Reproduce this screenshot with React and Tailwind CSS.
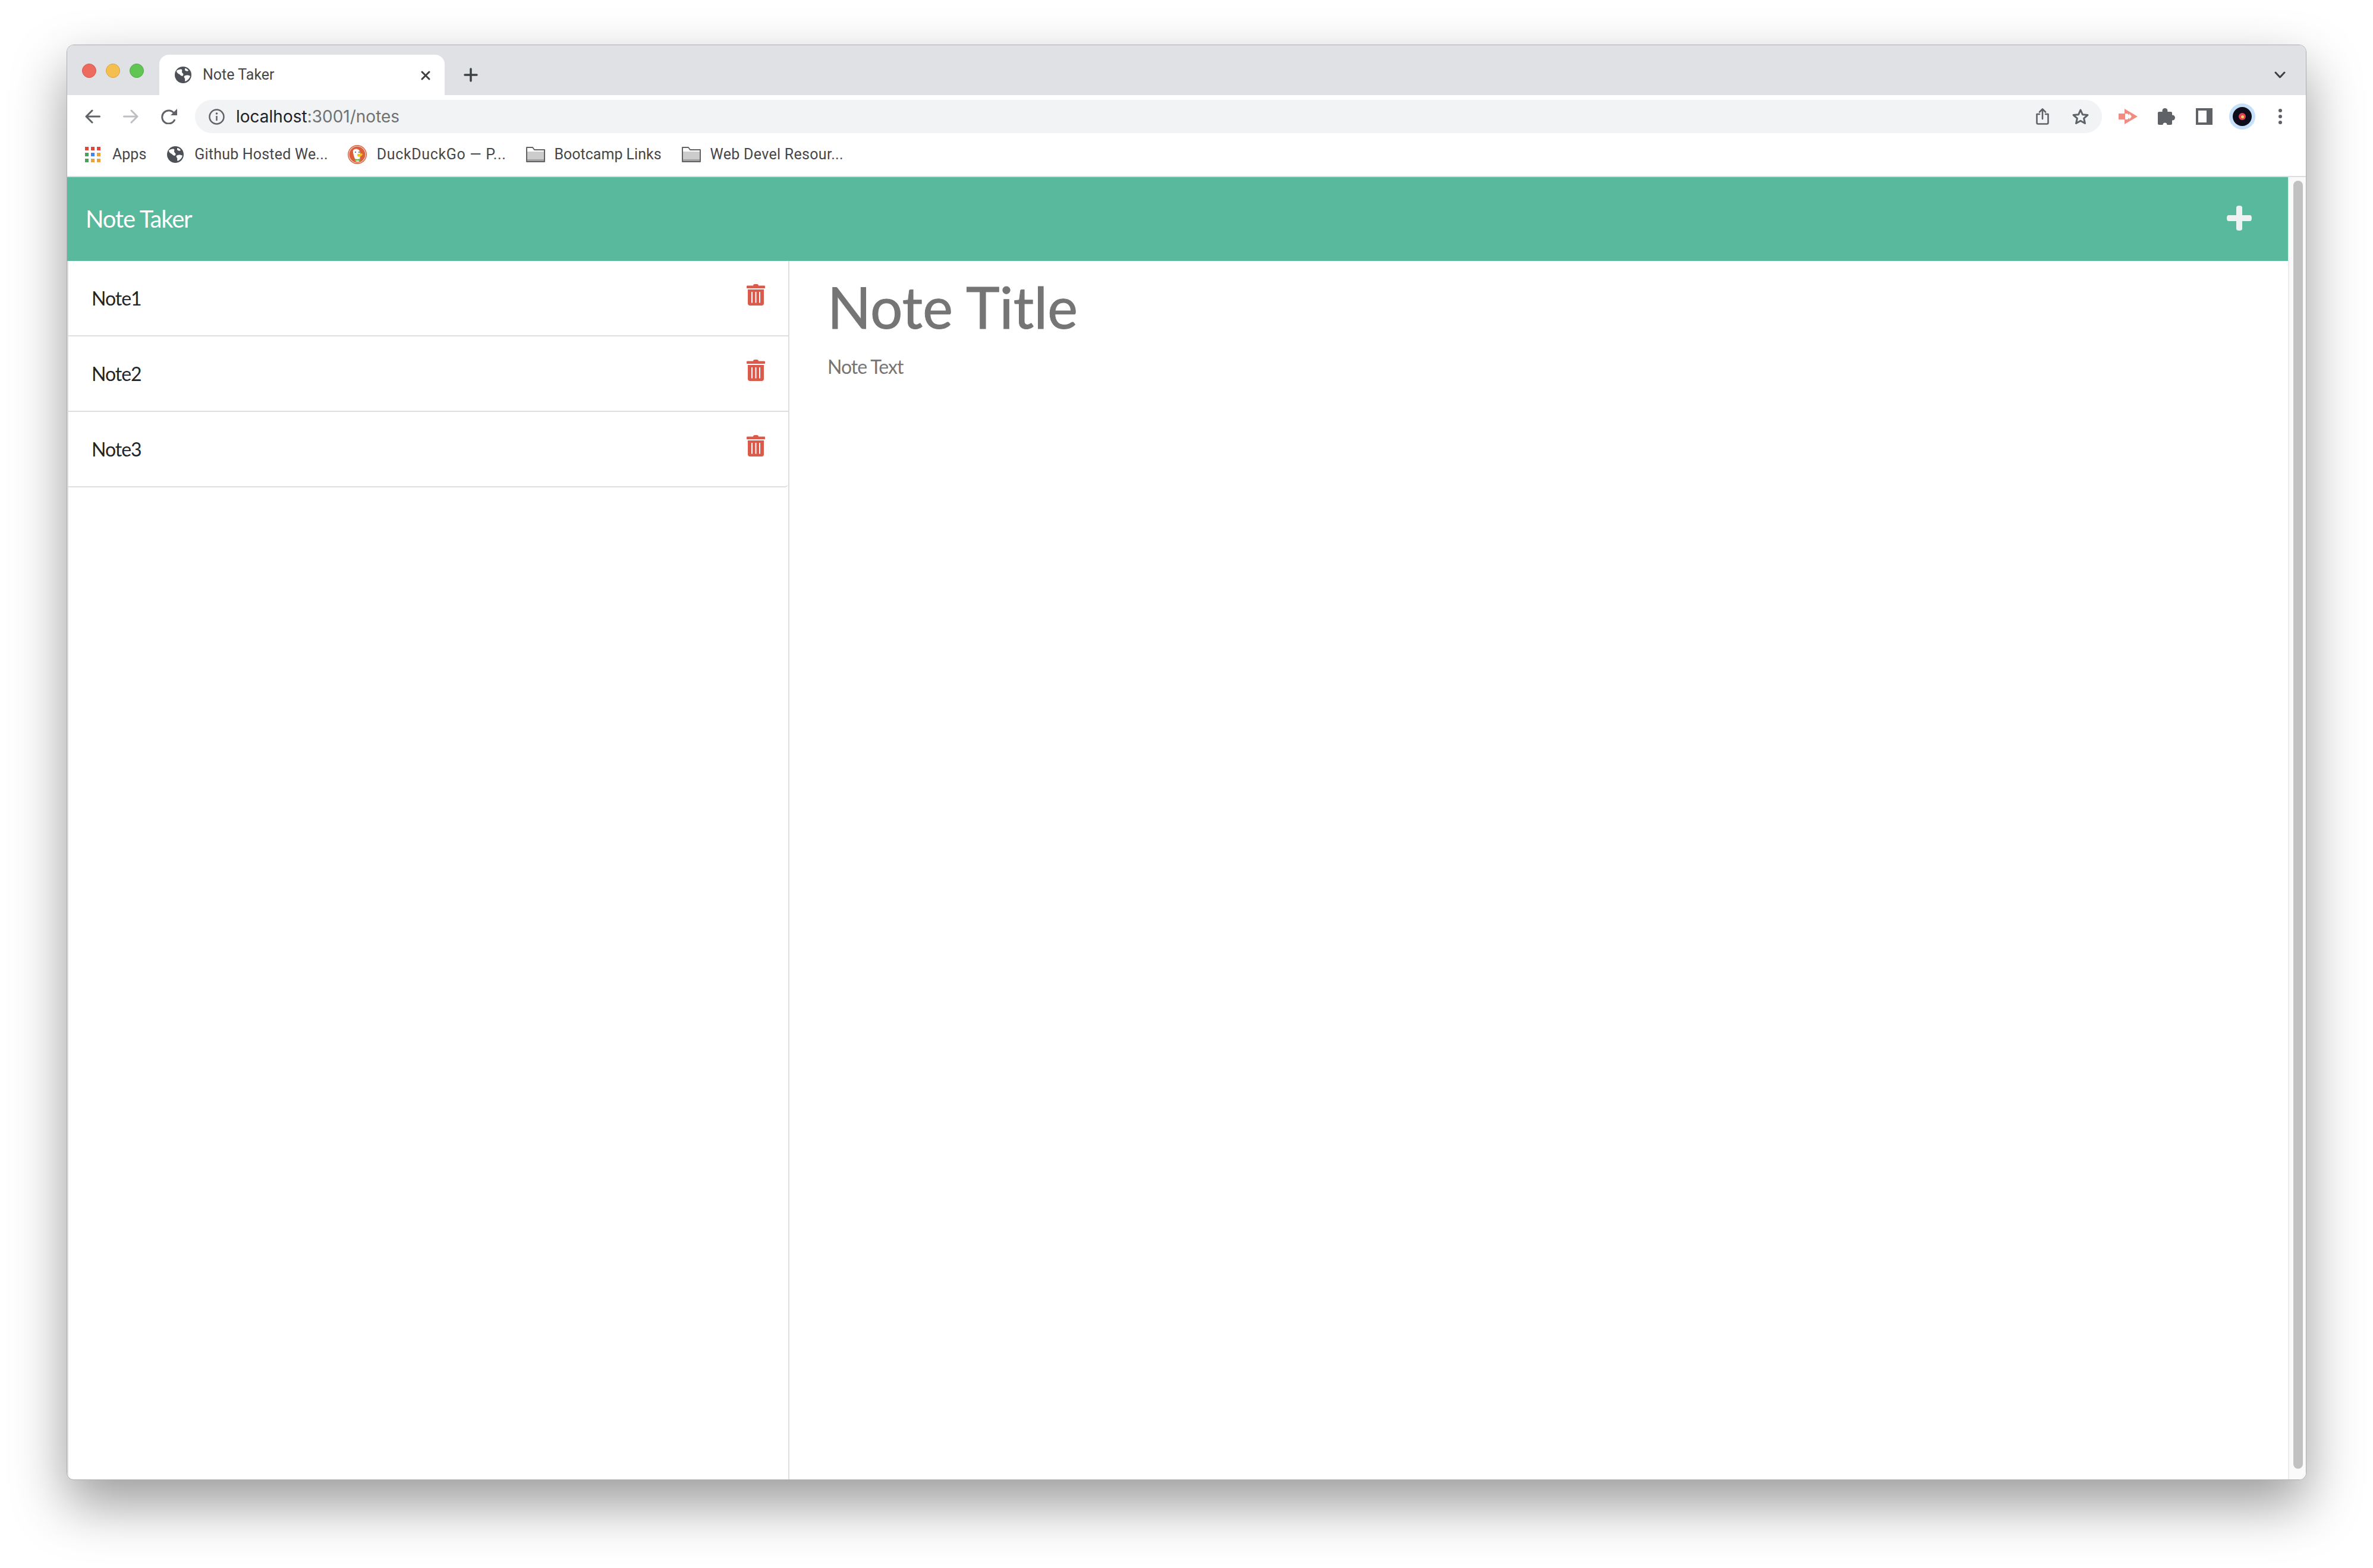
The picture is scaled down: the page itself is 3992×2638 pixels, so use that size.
const NOTES = ['Note1', 'Note2', 'Note3'];

function Globe({ className }) {
  return (
    <svg className={className} viewBox="0 0 28 28">
      <circle cx="14" cy="14" r="14" fill="#4d5157" />
      <path d="M3 7c3-2 6-3 9-2 1 2-1 4 1 6 2 1 2 3 0 5-3 0-4-3-7-4-1-1-3-2-3-5zM16 16c3-2 7-2 10 0-1 4-4 7-8 9-2-2 0-4-1-5-1-1-2-3-1-4zM17 3c3 0 5 2 6 4-2 1-4 1-6-1z" fill="#fff" />
    </svg>
  );
}

function Trash() {
  return (
    <svg className="w-[31px] h-[36px]" viewBox="0 0 31 36" fill="#da5b4b">
      <path d="M11 2.5C11 1 12 0 13.5 0h4C19 0 20 1 20 2.5h9.5c1 0 1.5.5 1.5 1.500v2c0 .7-.4 1-1 1H1c-.6 0-1-.3-1-1V4c0-1 .5-1.500 1.500-1.500z" />
      <path fillRule="evenodd" d="M2 9h27v23.500c0 2-1.500 3.500-3.500 3.500h-20C3.500 36 2 34.500 2 32.500zM8 13v18.500h2V13zM14.500 13v18.500h2V13zM21 13v18.500h2V13z" />
    </svg>
  );
}

function Folder() {
  return (
    <svg className="w-[32px] h-[26px]" viewBox="0 0 32 26">
      <path d="M1 1h10l3 4h17v20H1z" fill="#fff" stroke="#5f6368" strokeWidth="2" strokeLinejoin="round" />
      <path d="M2 8h28v16H2z" fill="#cccccc" />
      <path d="M2 21h28v3H2z" fill="#a3a3a3" />
    </svg>
  );
}

function AppsGrid() {
  const colors = ['#e2463a', '#e2463a', '#e2463a', '#4f9d5f', '#4285f4', '#e8a33a', '#4f9d5f', '#e8a33a', '#e8a33a'];
  return (
    <div className="grid grid-cols-3 gap-[4px] w-[26px]">
      {colors.map((c, i) => (
        <div key={i} className="w-[6px] h-[6px]" style={{ background: c }} />
      ))}
    </div>
  );
}

function Duck() {
  return (
    <svg className="w-[32px] h-[32px]" viewBox="0 0 32 32">
      <circle cx="16" cy="16" r="16" fill="#d9603b" />
      <circle cx="16" cy="16" r="14" fill="none" stroke="#f6d9cf" strokeWidth="1.200" />
      <path d="M9 9c3-4 9-3 11 1l1 5-1 12c-2 2-6 1-7 0-1-6-5-12-4-18z" fill="#fff" />
      <path d="M16 15c3 0 6-1 8-1l1 2-3 3c-2 1-5 1-6-1z" fill="#f5c518" />
      <path d="M12 23l4 1 4-1v4l-4-1-4 1z" fill="#65bc46" />
      <circle cx="13" cy="12" r="1" fill="#2d4f8e" />
      <circle cx="19" cy="12" r="1" fill="#2d4f8e" />
    </svg>
  );
}

export default function App() {
  return (
    <div className="w-[3992px] h-[2638px] bg-white pt-[75px] pl-[112px] overflow-hidden font-['Inter',sans-serif]">
      <div className="w-[3768px] h-[2415px] flex flex-col rounded-[12px] overflow-hidden border border-[#aeaeae] shadow-[0_40px_92px_rgba(0,0,0,0.4)] bg-white">

        {/* Tab strip */}
        <div className="h-[84px] bg-[#dfe1e5] flex shrink-0 pt-[16px] pr-[34px]">
          <div className="flex items-center gap-[16px] pl-[25px] w-[155px] h-[40px] mt-[7px]">
            <div className="w-[24px] h-[24px] rounded-full bg-[#ed6a5e] border border-[#d8574b]" />
            <div className="w-[24px] h-[24px] rounded-full bg-[#f5bf4f] border border-[#d9a441]" />
            <div className="w-[24px] h-[24px] rounded-full bg-[#61c554] border border-[#52a945]" />
          </div>
          <div className="w-[480px] h-[68px] bg-white rounded-t-[16px] flex items-center pl-[26px] pr-[24px] gap-[19px]">
            <Globe className="w-[28px] h-[28px]" />
            <span className="text-[25px] text-[#45474a] font-['Roboto',sans-serif] flex-1">Note Taker</span>
            <svg className="w-[16px] h-[16px] mt-[2px]" viewBox="0 0 16 16" stroke="#3c4043" strokeWidth="3" strokeLinecap="round">
              <path d="M2 2l12 12M14 2L2 14" />
            </svg>
          </div>
          <div className="flex items-center justify-center w-[76px] h-[68px] ml-[6px]">
            <svg className="w-[24px] h-[24px]" viewBox="0 0 24 24" stroke="#3c4043" strokeWidth="3.500" strokeLinecap="round">
              <path d="M12 2v20M2 12h20" />
            </svg>
          </div>
          <div className="flex-1 flex items-center justify-end h-[68px]">
            <svg className="w-[19px] h-[12px]" viewBox="0 0 19 12" fill="none" stroke="#3c4043" strokeWidth="3" strokeLinecap="round" strokeLinejoin="round">
              <path d="M2 2l7.500 8L17 2" />
            </svg>
          </div>
        </div>

        {/* Toolbar */}
        <div className="h-[72px] bg-white flex items-center shrink-0 pl-[30px]">
          <svg className="w-[26px] h-[24px]" viewBox="0 0 26 24" fill="none" stroke="#5f6368" strokeWidth="3" strokeLinecap="round" strokeLinejoin="round">
            <path d="M24.500 12H2M12 2L2 12l10 10" />
          </svg>
          <svg className="w-[26px] h-[24px] ml-[38px]" viewBox="0 0 26 24" fill="none" stroke="#bdbfc2" strokeWidth="3" strokeLinecap="round" strokeLinejoin="round">
            <path d="M1.500 12H24M14 2l10 10-10 10" />
          </svg>
          <svg className="w-[27px] h-[26px] ml-[38px]" viewBox="0 0 27 26" fill="none" stroke="#5f6368" strokeWidth="3">
            <path d="M23 18a11 11 0 1 1-1-10" />
            <path d="M27 0v11H16z" fill="#5f6368" stroke="none" />
          </svg>
          <div className="w-[3208px] h-[56px] ml-[30px] rounded-full bg-[#f1f3f4] flex items-center pl-[23px] pr-[21px]">
            <svg className="w-[27px] h-[27px]" viewBox="0 0 27 27" fill="none" stroke="#5f6368" strokeWidth="2.500">
              <circle cx="13.500" cy="13.500" r="12" />
              <path d="M13.500 12v8" />
              <circle cx="13.500" cy="8" r="1.800" fill="#5f6368" stroke="none" />
            </svg>
            <span className="ml-[19px] flex-1 text-[28px] text-[#202124]">
              localhost<span className="text-[#6f7275]">:3001/notes</span>
            </span>
            <svg className="w-[22px] h-[28px]" viewBox="0 0 22 28" fill="none" stroke="#5f6368" strokeWidth="2.600" strokeLinecap="round" strokeLinejoin="round">
              <path d="M6 10H1.500v14.500c0 1.200.8 2 2 2h15c1.200 0 2-.8 2-2V10H16M11 18V1.500M6 6.500l5-5 5 5" />
            </svg>
            <svg className="w-[30px] h-[28px] ml-[38px]" viewBox="0 0 30 28" fill="none" stroke="#5f6368" strokeWidth="3" strokeLinejoin="round">
              <path d="M15 3l3.500 7.800 8.500.8-6.400 5.600 1.900 8.300L15 21.200l-7.500 4.300 1.900-8.300L3 11.600l8.500-.8z" />
            </svg>
          </div>
          <svg className="w-[32px] h-[26px] ml-[28px]" viewBox="0 0 32 26" fill="#f28b82">
            <path d="M0 8h10v10H0z" />
            <path d="M10 0l22 13-22 13z" />
            <path d="M11 8h4l3 3V8l4 5-4 5v-3l-3 3h-4z" fill="#fff" />
          </svg>
          <svg className="w-[29px] h-[28px] ml-[34px]" viewBox="0 0 29 28" fill="#5f6368">
            <rect x="0" y="6" width="24" height="22" rx="2" />
            <circle cx="12" cy="4.500" r="4.500" />
            <circle cx="24.500" cy="16" r="4.500" />
            <circle cx="12" cy="28" r="3.500" fill="#fff" />
          </svg>
          <div className="w-[28px] h-[28px] ml-[35px] border-[4px] border-r-[10px] border-[#5f6368]" />
          <div className="w-[44px] h-[44px] ml-[28px] rounded-full bg-[#c6e0f9] flex items-center justify-center">
            <div className="w-[32px] h-[32px] rounded-full bg-[#0d0d1c] flex items-center justify-center">
              <div className="w-[12px] h-[12px] rounded-full bg-[#e0405a] flex items-center justify-center">
                <div className="w-[5px] h-[5px] rounded-full bg-[#f5d14a]" />
              </div>
            </div>
          </div>
          <div className="flex flex-col gap-[4px] ml-[39px]">
            <div className="w-[6px] h-[6px] rounded-full bg-[#5f6368]" />
            <div className="w-[6px] h-[6px] rounded-full bg-[#5f6368]" />
            <div className="w-[6px] h-[6px] rounded-full bg-[#5f6368]" />
          </div>
        </div>

        {/* Bookmarks bar */}
        <div className="h-[66px] bg-white flex items-center shrink-0 pl-[30px] pb-[8px] border-b-2 border-[#dedede] font-['Roboto',sans-serif] text-[25px] text-[#45474a]">
          <AppsGrid />
          <span className="ml-[20px]">Apps</span>
          <Globe className="w-[28px] h-[28px] ml-[35px]" />
          <span className="ml-[18px] tracking-[0.2px]">Github Hosted We...</span>
          <div className="ml-[33px]"><Duck /></div>
          <span className="ml-[17px] tracking-[0.65px]">DuckDuckGo — P...</span>
          <div className="ml-[33px]"><Folder /></div>
          <span className="ml-[16px]">Bootcamp Links</span>
          <div className="ml-[34px]"><Folder /></div>
          <span className="ml-[16px] tracking-[0.3px]">Web Devel Resour...</span>
        </div>

        {/* Page */}
        <div className="flex-1 flex min-h-0 font-['Lato',sans-serif]">
          <div className="flex-1 flex flex-col min-w-0">
            <div className="h-[141px] bg-[#58b99d] flex items-center justify-between shrink-0 pl-[31px] pr-[61px]">
              <span className="text-[40px] tracking-[-1.2px] text-white mb-[2px]">Note Taker</span>
              <svg className="w-[42px] h-[42px] mb-[4px]" viewBox="0 0 42 42" fill="#eef3f2">
                <path d="M16 3c0-2 2-3 5-3s5 1 5 3v13h13c2 0 3 2 3 5s-1 5-3 5H26v13c0 2-2 3-5 3s-5-1-5-3V26H3c-2 0-3-2-3-5s1-5 3-5h13z" />
              </svg>
            </div>
            <div className="flex-1 flex min-h-0">
              <div className="w-[1215px] shrink-0 border-r-2 border-l-2 border-[#dedede]">
                {NOTES.map((note, i) => (
                  <div key={note} className={`h-[127px] flex items-center justify-between pl-[39px] pr-[39px] border-b-2 border-[#dedede] ${i === NOTES.length - 1 ? 'rounded-br-[6px]' : ''}`}>
                    <span className="text-[32px] tracking-[-1px] text-[#212529]">{note}</span>
                    <div className="mb-[11px]"><Trash /></div>
                  </div>
                ))}
              </div>
              <div className="flex-1 pl-[64px] pt-[19px]">
                <div className="text-[96px] leading-[1.2] tracking-[0.2px] text-[#757575] [-webkit-text-stroke:1px_#757575]">Note Title</div>
                <div className="text-[32px] tracking-[-1px] text-[#757575] mt-[20px]">Note Text</div>
              </div>
            </div>
          </div>

          {/* Scrollbar */}
          <div className="w-[30px] bg-[#fafafa] border-l-2 border-[#ececec] shrink-0 flex justify-center pt-[6px] pb-[18px] pl-[1px]">
            <div className="w-[16px] h-full rounded-full bg-[#c1c1c1]" />
          </div>
        </div>
      </div>
    </div>
  );
}
